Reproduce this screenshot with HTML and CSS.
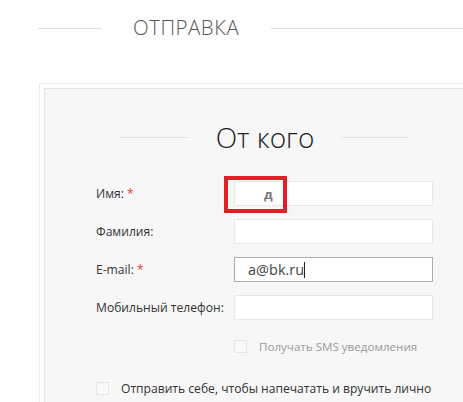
FILE: index.html
```html
<!DOCTYPE html>
<html lang="ru">
<head>
<meta charset="utf-8">
<link rel="stylesheet" href="styles.css">
</head>
<body>
<div class="top">
  <span class="top-line top-line-left"></span>
  <span class="top-title">ОТПРАВКА</span>
  <span class="top-line top-line-right"></span>
</div>
<div class="panel">
  <div class="panel-inner">
    <div class="section-head">
      <span class="head-line"></span>
      <span class="head-title">От кого</span>
      <span class="head-line"></span>
    </div>
    <div class="form">
      <div class="row">
        <div class="label">Имя: <span class="req">*</span></div>
        <div class="field field-name"><span class="value value-name">д</span><span class="mark"></span></div>
      </div>
      <div class="row">
        <div class="label">Фамилия:</div>
        <div class="field"></div>
      </div>
      <div class="row">
        <div class="label">E-mail: <span class="req">*</span></div>
        <div class="field field-focus"><span class="value">a@bk.ru</span><span class="caret"></span></div>
      </div>
      <div class="row">
        <div class="label">Мобильный телефон:</div>
        <div class="field"></div>
      </div>
      <div class="sms">
        <span class="box"></span>
        <span class="sms-text">Получать SMS уведомления</span>
      </div>
      <div class="self">
        <span class="box"></span>
        <span class="self-text">Отправить себе, чтобы напечатать и вручить лично</span>
      </div>
    </div>
  </div>
</div>
</body>
</html>
```
FILE: styles.css
```css
html, body {
  margin: 0;
  padding: 0;
  background: #fff;
  overflow: hidden;
}
body {
  width: 463px;
  height: 402px;
  font-family: "Open Sans", "Noto Sans", sans-serif;
  color: #333;
}
.top {
  display: flex;
  align-items: center;
  padding-top: 16px;
  padding-left: 38px;
  height: 24px;
}
.top-line {
  height: 1px;
  background: #dedede;
}
.top-line-left {
  width: 64px;
}
.top-line-right {
  flex: 1;
}
.top-title {
  margin: -3px 32px 0 31px;
  font-family: "Open Sans", sans-serif;
  font-weight: 300;
  font-size: 20.5px;
  line-height: 24px;
  color: #555;
  letter-spacing: 0.5px;
}
.panel {
  margin-top: 43px;
  margin-left: 39px;
  width: 460px;
  border: 1px solid #ececec;
  padding: 4px;
  background: #fff;
}
.panel-inner {
  border: 1px solid #e6e6e6;
  background: #f7f7f7;
  height: 330px;
  padding-top: 30px;
}
.section-head {
  display: flex;
  align-items: center;
  justify-content: space-between;
  margin-left: 76px;
  width: 288px;
  height: 36px;
}
.head-line {
  width: 68px;
  height: 1px;
  background: #e2e2e2;
}
.head-title {
  font-family: "Open Sans", sans-serif;
  font-weight: 300;
  font-size: 28px;
  line-height: 36px;
  color: #222;
}
.form {
  margin-top: 26px;
  padding-left: 51px;
}
.row {
  display: grid;
  grid-template-columns: 138px 199px;
  align-items: center;
  height: 25px;
  margin-bottom: 13px;
}
.label {
  font-size: 12.1px;
  color: #333;
}
.req {
  color: #e23a3a;
}
.field {
  position: relative;
  box-sizing: border-box;
  height: 25px;
  border: 1px solid #e8e8e8;
  background: #fff;
  display: flex;
  align-items: center;
}
.field-focus {
  border-color: #acacac;
}
.value {
  padding-left: 13px;
  font-size: 14.5px;
  color: #444;
}
.value-name {
  padding-left: 29px;
  font-weight: 700;
  font-size: 13px;
  color: #777;
}
.caret {
  width: 1px;
  height: 16px;
  background: #222;
}
.mark {
  position: absolute;
  left: -11px;
  top: -6px;
  width: 63px;
  height: 37px;
  box-sizing: border-box;
  border: 4px solid #e31e26;
}
.sms {
  display: flex;
  align-items: center;
  margin-left: 138px;
  margin-top: 19px;
  height: 14px;
}
.box {
  box-sizing: border-box;
  width: 13px;
  height: 13px;
  border: 1px solid #e6e6e6;
  background: #f9f9f9;
}
.sms-text {
  margin-left: 12px;
  font-size: 11.6px;
  color: #9a9a9a;
}
.self {
  display: flex;
  align-items: center;
  margin-top: 28px;
  height: 14px;
}
.self-text {
  margin-left: 12px;
  font-size: 12.1px;
  color: #333;
}
```
